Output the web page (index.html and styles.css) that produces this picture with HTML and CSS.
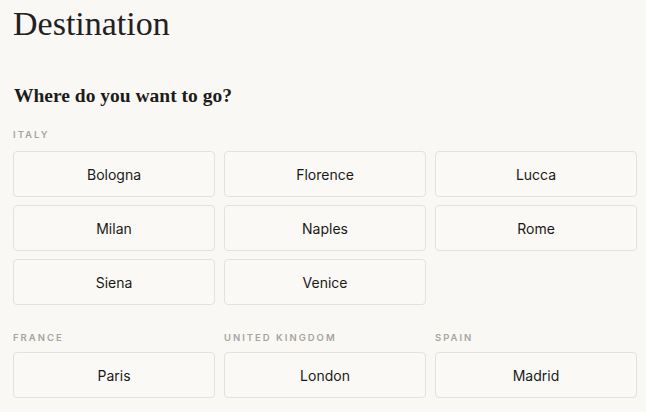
FILE: index.html
```html
<!DOCTYPE html>
<html lang="en">
  <head>
    <meta charset="UTF-8" />
    <meta name="viewport" content="width=device-width, initial-scale=1.0" />
    <title>Destination</title>
    <link rel="stylesheet" href="styles.css">
  </head>
  <body>
    <div class="page">
      <h1 class="title">Destination</h1>
      <h2 class="question">Where do you want to go?</h2>

      <!-- Italy -->
      <p class="country">Italy</p>
      <div class="cities">
        <button class="city">Bologna</button>
        <button class="city">Florence</button>
        <button class="city">Lucca</button>
        <button class="city">Milan</button>
        <button class="city">Naples</button>
        <button class="city">Rome</button>
        <button class="city">Siena</button>
        <button class="city">Venice</button>
      </div>

      <!-- Others -->
      <div class="groups">
        <div class="group">
          <p class="country">France</p>
          <button class="city">Paris</button>
        </div>
        <div class="group">
          <p class="country">United Kingdom</p>
          <button class="city">London</button>
        </div>
        <div class="group">
          <p class="country">Spain</p>
          <button class="city">Madrid</button>
        </div>
      </div>
    </div>
  </body>
</html>
```

FILE: styles.css
```css
* {
  box-sizing: border-box;
}

body {
  margin: 0;
  background-color: #f9f8f5;
  font-family: Inter, "Noto Sans", sans-serif;
  color: #1d1c1a;
}

.page {
  padding: 4px 9px 0 13px;
}

.title {
  font-family: "Liberation Serif", serif;
  font-weight: normal;
  font-size: 34px;
  line-height: 40px;
  margin: 0 0 40px 0;
  color: #22211f;
}

.question {
  font-family: "Liberation Serif", serif;
  font-weight: bold;
  font-size: 19.5px;
  line-height: 24px;
  margin: 0 0 21px 1px;
}

.country {
  margin: 0 0 10px 0;
  font-size: 9.5px;
  line-height: 12px;
  font-weight: 600;
  letter-spacing: 2px;
  text-transform: uppercase;
  color: #a8a49e;
}

.group .country {
  margin-bottom: 8px;
}

.cities {
  display: grid;
  grid-template-columns: repeat(3, 1fr);
  gap: 8px 9px;
}

.city {
  height: 46px;
  width: 100%;
  background-color: #faf9f6;
  border: 1px solid #e4e2dd;
  border-radius: 4px;
  font-family: Inter, "Noto Sans", sans-serif;
  font-size: 14px;
  color: #1a1917;
}

.groups {
  display: grid;
  grid-template-columns: repeat(3, 1fr);
  gap: 9px;
  margin-top: 27px;
}
```
